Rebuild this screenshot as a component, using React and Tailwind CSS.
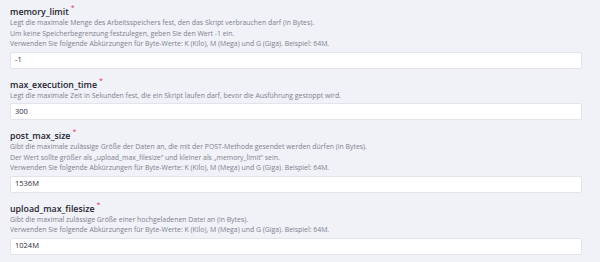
const fields = [
  {
    name: 'memory_limit',
    desc: [
      'Legt die maximale Menge des Arbeitsspeichers fest, den das Skript verbrauchen darf (in Bytes).',
      'Um keine Speicherbegrenzung festzulegen, geben Sie den Wert -1 ein.',
      'Verwenden Sie folgende Abkürzungen für Byte-Werte: K (Kilo), M (Mega) und G (Giga). Beispiel: 64M.',
    ],
    value: '-1',
  },
  {
    name: 'max_execution_time',
    desc: ['Legt die maximale Zeit in Sekunden fest, die ein Skript laufen darf, bevor die Ausführung gestoppt wird.'],
    value: '300',
  },
  {
    name: 'post_max_size',
    desc: [
      'Gibt die maximale zulässige Größe der Daten an, die mit der POST-Methode gesendet werden dürfen (in Bytes).',
      'Der Wert sollte größer als „upload_max_filesize“ und kleiner als „memory_limit“ sein.',
      'Verwenden Sie folgende Abkürzungen für Byte-Werte: K (Kilo), M (Mega) und G (Giga). Beispiel: 64M.',
    ],
    value: '1536M',
  },
  {
    name: 'upload_max_filesize',
    desc: [
      'Gibt die maximal zulässige Größe einer hochgeladenen Datei an (in Bytes).',
      'Verwenden Sie folgende Abkürzungen für Byte-Werte: K (Kilo), M (Mega) und G (Giga). Beispiel: 64M.',
    ],
    value: '1024M',
  },
]

function Field({ f }) {
  return (
    <div className="flex flex-col">
      <div className="flex items-start h-[10px]">
        <span className="text-[8.8px] leading-[10px] font-semibold text-[#1f2330]">{f.name}</span>
        <span className="text-[7px] leading-[7px] text-[#e8336b] ml-[2px] -mt-[3px]">*</span>
      </div>
      <div className="flex flex-col pt-[1px]">
        {f.desc.map((d) => (
          <p key={d} className="text-[6.9px] leading-[10.5px] text-[#7d808e]">{d}</p>
        ))}
      </div>
      <div className="mt-[2px] h-[17px] bg-white border border-[#e3e4ea] rounded-[2px] flex items-center px-[4px] text-[7.5px] text-[#2a2d38]">
        {f.value}
      </div>
    </div>
  )
}

export default function App() {
  return (
    <div className="w-[600px] h-[262px] bg-[#f1f2f7] overflow-hidden pl-[10px] pr-[18px] pt-[7px] flex flex-col gap-[11px]" style={{ fontFamily: '"Open Sans", "Noto Sans", sans-serif' }}>
      {fields.map((f) => <Field key={f.name} f={f} />)}
    </div>
  )
}
